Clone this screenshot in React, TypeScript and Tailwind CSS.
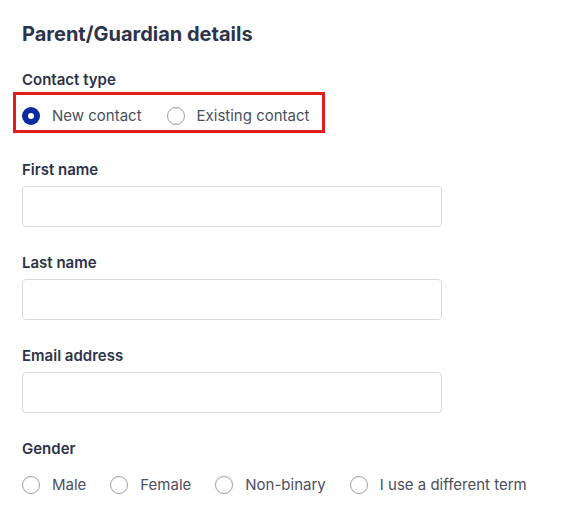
import React from "react";

function Radio({ checked, label }: { checked?: boolean; label: string }) {
  return (
    <label className="flex items-center gap-3 cursor-pointer">
      {checked ? (
        <span className="w-[18px] h-[18px] rounded-full bg-[#0b2c9f] flex items-center justify-center">
          <span className="w-[6px] h-[6px] rounded-full bg-white" />
        </span>
      ) : (
        <span className="w-[18px] h-[18px] rounded-full border border-[#9b9fa8] bg-white" />
      )}
      <span className="text-[15px] leading-5 text-[#4b505d]">{label}</span>
    </label>
  );
}

function Field({ label }: { label: string }) {
  return (
    <div className="flex flex-col">
      <div className="text-[15px] leading-5 font-semibold text-[#2d3349]">{label}</div>
      <input className="mt-[6px] w-[420px] h-[41px] rounded-[4px] border border-[#d9dadf] bg-white outline-none" />
    </div>
  );
}

export default function App() {
  return (
    <div
      className="w-[564px] h-[521px] bg-white pl-[22px] pt-[20px] overflow-hidden"
      style={{ fontFamily: "Inter, 'Noto Sans', sans-serif" }}
    >
      <h2 className="text-[20px] leading-7 font-bold text-[#2d3349]">Parent/Guardian details</h2>

      <div className="mt-[22px] text-[15px] leading-5 font-semibold text-[#2d3349]">Contact type</div>
      <div className="relative mt-[16px] flex items-center gap-[25px] h-5">
        <div className="absolute left-[-9px] top-[-14px] w-[312px] h-[41px] border-[3px] border-[#e21c1c] pointer-events-none" />
        <Radio checked label="New contact" />
        <Radio label="Existing contact" />
      </div>

      <div className="mt-[34px] flex flex-col gap-[26px]">
        <Field label="First name" />
        <Field label="Last name" />
        <Field label="Email address" />
        <div className="flex flex-col">
          <div className="text-[15px] leading-5 font-semibold text-[#2d3349]">Gender</div>
          <div className="mt-[16px] flex items-center gap-[24px] h-5">
            <Radio label="Male" />
            <Radio label="Female" />
            <Radio label="Non-binary" />
            <Radio label="I use a different term" />
          </div>
        </div>
      </div>
    </div>
  );
}
